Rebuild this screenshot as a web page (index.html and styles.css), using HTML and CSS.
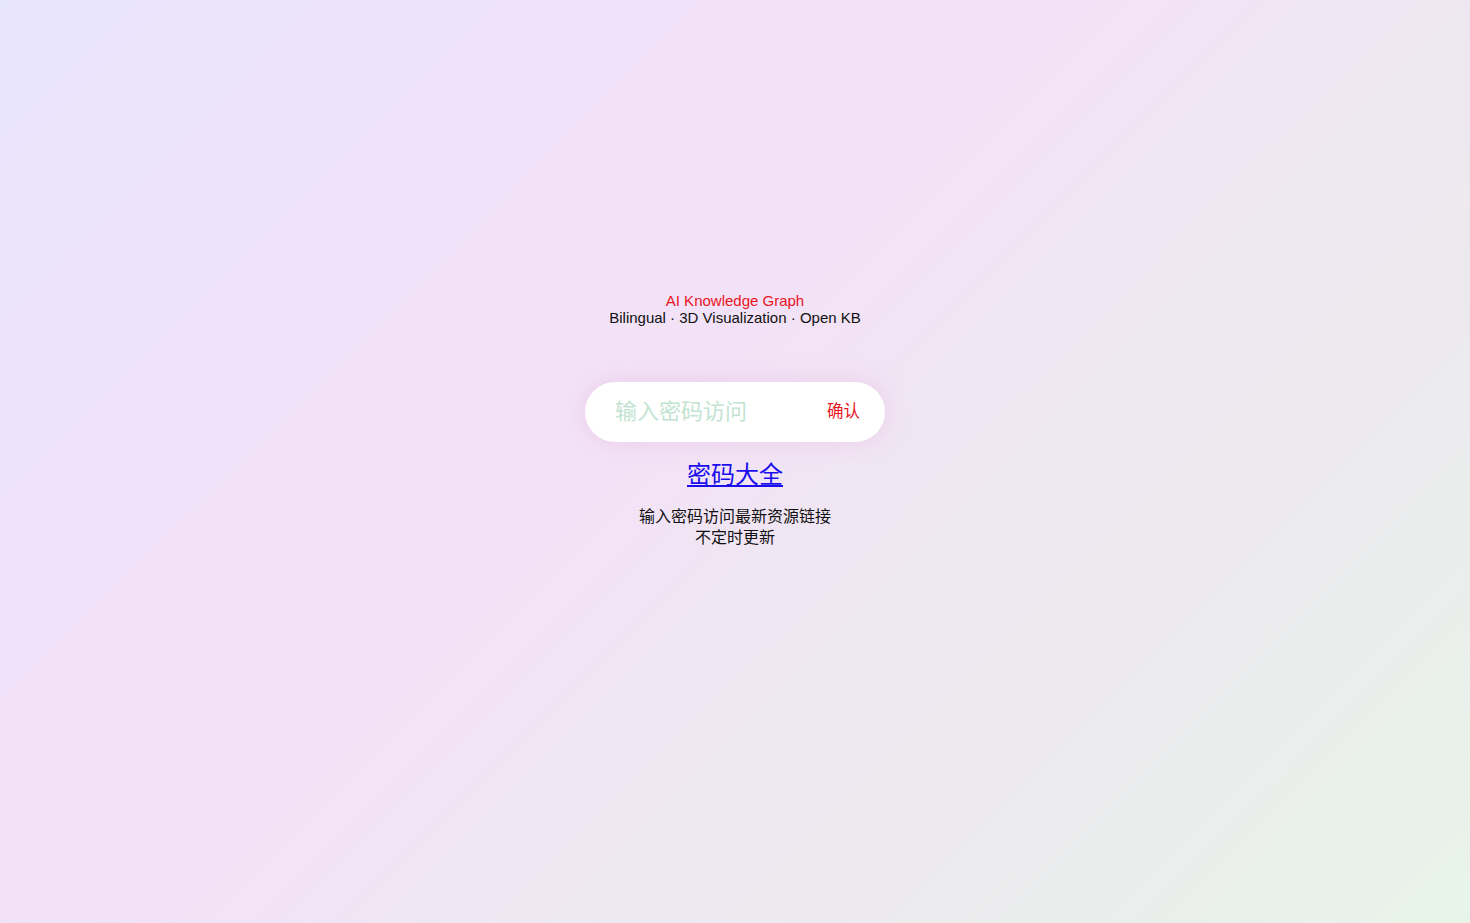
FILE: index.html
```html
<!DOCTYPE html>
<html lang="zh">
<head>
<meta charset="utf-8">
<title>AI Knowledge Graph</title>
<link rel="stylesheet" href="styles.css">
</head>
<body>
<main class="page">
  <header class="hero">
    <div class="title">AI Knowledge Graph</div>
    <div class="subtitle">Bilingual · 3D Visualization · Open KB</div>
  </header>
  <form class="pill" onsubmit="return false;">
    <input class="pill-input" type="password" placeholder="输入密码访问">
    <button class="pill-btn" type="submit">确认</button>
  </form>
  <a class="link" href="#">密码大全</a>
  <div class="desc">
    <div class="desc-line">输入密码访问最新资源链接</div>
    <div class="desc-line">不定时更新</div>
  </div>
</main>
</body>
</html>
```
FILE: styles.css
```css
html, body {
  margin: 0;
  padding: 0;
}
body {
  min-height: 100vh;
  background: linear-gradient(135deg, #e8e6fd 0%, #f0e2f9 25%, #f3e2f7 45%, #eee8f1 62%, #eceaee 75%, #e8f4e9 100%);
  font-family: "Liberation Sans", "Noto Sans CJK SC", sans-serif;
  color: #111;
}
.page {
  display: flex;
  flex-direction: column;
  align-items: center;
  padding-top: 292px;
}
.hero {
  text-align: center;
  font-size: 15px;
  line-height: 17px;
}
.title {
  color: #e8141e;
}
.subtitle {
  color: #111;
}
.pill {
  margin-top: 56px;
  width: 300px;
  height: 60px;
  box-sizing: border-box;
  border-radius: 30px;
  background: #fff;
  box-shadow: 0 0 22px rgba(232, 186, 224, 0.55);
  display: flex;
  align-items: center;
  padding: 0 25px 0 30px;
}
.pill-input {
  flex: 1;
  min-width: 0;
  border: none;
  outline: none;
  background: transparent;
  font-family: "Noto Sans CJK SC", "Liberation Sans", sans-serif;
  font-size: 22px;
  padding: 0;
  margin-bottom: 6px;
  color: #333;
}
.pill-input::placeholder {
  color: #c2e3d1;
}
.pill-btn {
  border: none;
  background: transparent;
  padding: 0;
  margin-bottom: 4px;
  font-family: "Noto Sans CJK SC", "Liberation Sans", sans-serif;
  font-size: 16.5px;
  color: #e8141e;
  cursor: pointer;
}
.link {
  margin-top: 15px;
  font-family: "Noto Sans CJK SC", "Liberation Sans", sans-serif;
  font-size: 24px;
  line-height: 32px;
  color: #1a0dee;
  text-decoration: underline;
  text-underline-offset: 2px;
}
.desc {
  margin-top: 16px;
  display: flex;
  flex-direction: column;
  align-items: center;
  font-family: "Noto Sans CJK SC", "Liberation Sans", sans-serif;
  font-size: 16px;
  color: #111;
}
.desc-line {
  line-height: 21px;
}
```
